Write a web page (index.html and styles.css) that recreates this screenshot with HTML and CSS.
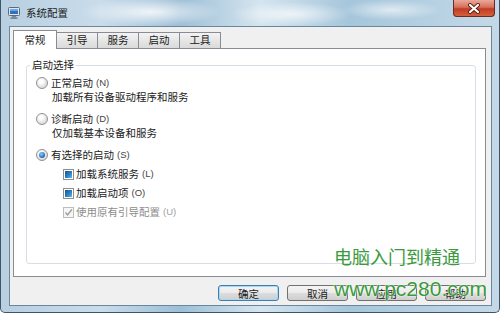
FILE: index.html
```html
<!DOCTYPE html>
<html lang="zh-CN">
<head>
<meta charset="UTF-8" />
<meta name="viewport" content="width=device-width, initial-scale=1" />
<title>系统配置</title>
<link rel="stylesheet" href="styles.css">
</head>
<body>

<div class="window">
  <div class="titlebar">
    <svg class="app-icon" width="12" height="12" viewBox="0 0 12 12">
      <rect x="0.5" y="0.5" width="11" height="8" rx="1" fill="#dfe6ee" stroke="#5a6b7c"/>
      <rect x="2" y="2" width="8" height="5" fill="#2f6fc4"/>
      <rect x="2" y="2" width="8" height="2" fill="#6aa6e8"/>
      <rect x="4" y="9" width="4" height="1.5" fill="#7d8894"/>
      <rect x="2.5" y="10.5" width="7" height="1.2" fill="#5a6b7c"/>
    </svg>
    <span class="title">系统配置</span>
    <button class="close">
      <svg width="14" height="11" viewBox="0 0 14 11">
        <path d="M3 2 L11 9 M11 2 L3 9" stroke="#5a1e14" stroke-width="4" stroke-linecap="round"/>
        <path d="M3 2 L11 9 M11 2 L3 9" stroke="#fff" stroke-width="2.2" stroke-linecap="round"/>
      </svg>
    </button>
  </div>

  <div class="client">
    <div class="tabs">
      <div class="tab active">常规</div>
      <div class="tab">引导</div>
      <div class="tab">服务</div>
      <div class="tab">启动</div>
      <div class="tab">工具</div>
    </div>

    <div class="panel">
      <fieldset class="group">
        <legend>启动选择</legend>

        <div class="option">
          <div class="row"><span class="radio"></span>正常启动<span class="key">(N)</span></div>
          <div class="desc">加载所有设备驱动程序和服务</div>
        </div>

        <div class="option">
          <div class="row"><span class="radio"></span>诊断启动<span class="key">(D)</span></div>
          <div class="desc">仅加载基本设备和服务</div>
        </div>

        <div class="option">
          <div class="row"><span class="radio on"></span>有选择的启动<span class="key">(S)</span></div>
        </div>

        <div class="check"><span class="box mixed"></span>加载系统服务<span class="key">(L)</span></div>
        <div class="check"><span class="box mixed"></span>加载启动项<span class="key">(O)</span></div>
        <div class="check disabled">
          <span class="box">
            <svg width="9" height="9" viewBox="0 0 9 9"><path d="M1.5 4.5 L3.6 7 L7.8 1.5" fill="none" stroke="#9a9a9a" stroke-width="1.3"/></svg>
          </span>使用原有引导配置<span class="key">(U)</span>
        </div>
      </fieldset>
    </div>

    <div class="actions">
      <button class="btn default">确定</button>
      <button class="btn">取消</button>
      <button class="btn">应用</button>
      <button class="btn">帮助</button>
    </div>
  </div>

  <div class="watermark">
    <div class="wm-cn">电脑入门到精通</div>
    <div class="wm-url">www.pc280.com</div>
  </div>
</div>

</body>
</html>
```

FILE: styles.css
```css
body {
  margin: 0;
  width: 500px;
  height: 313px;
  overflow: hidden;
  font-family: "Noto Sans CJK SC", "Liberation Sans", sans-serif;
  font-size: 10.5px;
  color: #1b1b1b;
}
.window {
  position: relative;
  box-sizing: border-box;
  width: 500px;
  height: 313px;
  padding: 0 7px 7px 8px;
  border: 1px solid #3e5468;
  border-top: none;
  border-radius: 0 0 5px 5px;
  background:
    radial-gradient(ellipse 70px 14px at 150px 12px, rgba(255,255,255,0.8), transparent),
    radial-gradient(ellipse 60px 12px at 290px 14px, rgba(255,255,255,0.7), transparent),
    radial-gradient(ellipse 50px 10px at 390px 10px, rgba(255,255,255,0.6), transparent),
    linear-gradient(90deg, #b7cfe1 0%, #c9dcea 20%, #9dbfd6 36%, #d5e5ef 52%, #a5c6db 70%, #c4d9e8 100%);
}
.titlebar {
  display: flex;
  align-items: flex-start;
  height: 26px;
  margin-left: -1px;
}
.app-icon {
  margin-top: 7px;
}
.title {
  margin: 6px 0 0 6px;
  line-height: 14px;
  color: #1a1a1a;
}
.close {
  margin-left: auto;
  margin-right: -3px;
  width: 42px;
  height: 17px;
  padding: 0;
  border: 1px solid #6a2b20;
  border-top: none;
  border-radius: 0 0 4px 4px;
  background: linear-gradient(#e9a99a 0%, #d7705a 45%, #c13b22 55%, #d4603f 100%);
  display: flex;
  justify-content: center;
  align-items: center;
}
.client {
  box-sizing: border-box;
  height: 280px;
  padding: 3px 5px 0 3px;
  border: 1px solid #6b879e;
  background: #f0f0f0;
}
.tabs {
  display: flex;
  align-items: flex-end;
  height: 19px;
  margin-bottom: -1px;
}
.tab {
  position: relative;
  box-sizing: border-box;
  width: 42px;
  height: 17px;
  margin-left: -1px;
  border: 1px solid #898c95;
  background: linear-gradient(#f3f3f3, #e6e6e6 50%, #dadada);
  text-align: center;
  line-height: 14px;
}
.tab.active {
  width: 44px;
  height: 19px;
  margin-left: 0;
  border-bottom: none;
  background: #fff;
  z-index: 1;
  line-height: 17px;
}
.panel {
  box-sizing: border-box;
  height: 229px;
  padding: 9px 9px 0 12px;
  border: 1px solid #898c95;
  background: #fff;
}
.group {
  box-sizing: border-box;
  height: 206px;
  margin: 0;
  padding: 4px 9px 0 9px;
  border: 1px solid #d5dfe5;
  border-radius: 3px;
}
.group legend {
  margin-left: -6px;
  padding: 0 2px;
  line-height: 14px;
}
.option + .option {
  margin-top: 8px;
}
.row, .desc, .check {
  display: flex;
  align-items: center;
  height: 14px;
  line-height: 14px;
}
.desc {
  padding-left: 16px;
}
.key {
  margin-left: 3px;
  font-family: "Liberation Sans", sans-serif;
  font-size: 9.5px;
  color: #444;
}
.radio {
  box-sizing: border-box;
  width: 12px;
  height: 12px;
  margin-right: 3px;
  border: 1px solid #8f9294;
  border-radius: 50%;
  background: radial-gradient(circle at 40% 35%, #fff 20%, #e2e2e2 60%, #c9c9c9);
  display: flex;
  justify-content: center;
  align-items: center;
}
.radio.on::after {
  content: "";
  width: 6px;
  height: 6px;
  border-radius: 50%;
  background: radial-gradient(circle at 40% 35%, #8fd0f5, #2a73c2 60%, #173f7a);
}
.check {
  margin-top: 5px;
  padding-left: 27px;
}
.box {
  box-sizing: border-box;
  width: 11px;
  height: 11px;
  margin-right: 2px;
  border: 1px solid #8f8f8f;
  background: #fff;
  display: flex;
  justify-content: center;
  align-items: center;
}
.box.mixed::after {
  content: "";
  width: 7px;
  height: 7px;
  background: linear-gradient(135deg, #1d4f8a, #2f86c6 60%, #62c0e8);
}
.check.disabled {
  color: #8d8d8d;
}
.check.disabled .key {
  color: #a0a0a0;
}
.check.disabled .box {
  border-color: #bdbdbd;
  background: #f6f6f6;
}
.actions {
  display: flex;
  justify-content: flex-end;
  gap: 8px;
  margin-top: 8px;
}
.btn {
  box-sizing: border-box;
  width: 61px;
  height: 16px;
  padding: 0;
  border: 1px solid #707070;
  border-radius: 3px;
  background: linear-gradient(#f4f4f4 0%, #ebebeb 48%, #dcdcdc 52%, #cfcfcf 100%);
  font-family: inherit;
  font-size: 10.5px;
  line-height: 13px;
  color: #1b1b1b;
}
.btn.default {
  border-color: #3c7fb1;
  box-shadow: inset 0 0 0 1px #a8d8f5;
}
.watermark {
  position: absolute;
  left: 333px;
  top: 246px;
  color: #3a9a3c;
}
.wm-cn {
  font-size: 18px;
  line-height: 20px;
}
.wm-url {
  margin-top: 12px;
  font-family: "Liberation Sans", sans-serif;
  font-size: 21px;
  line-height: 21px;
  text-shadow: 0 0 2px #fff, 0 0 1px #fff;
}
```
